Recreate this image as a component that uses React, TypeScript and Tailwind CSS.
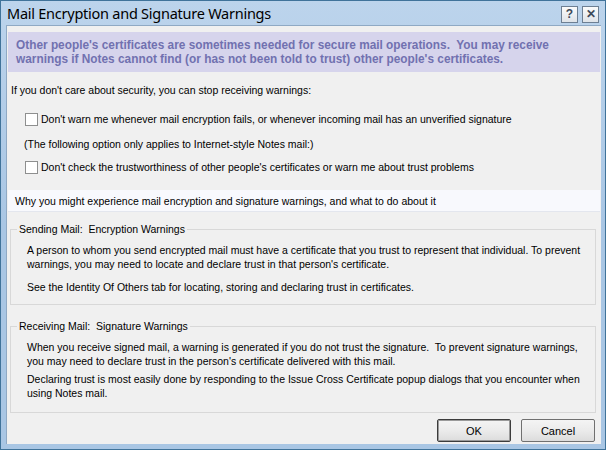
import type { ReactNode } from 'react'

function Check({ label }: { label: string }) {
  return (
    <div className="flex items-center gap-[3px] pl-[18px]">
      <span className="size-[13px] flex-none border border-[#8e8f8f] bg-white" />
      <span className="whitespace-nowrap">{label}</span>
    </div>
  )
}

function Group({ title, children, className }: { title: string; children: ReactNode; className: string }) {
  return (
    <fieldset className={`ml-[3px] mr-[5px] border border-[#d8d8d8] pl-[6px] pr-3 ${className}`}>
      <legend className="whitespace-pre px-[2px] leading-[14px]">{title}</legend>
      <div className="pl-[10px]">{children}</div>
    </fieldset>
  )
}

function Button({ label, primary }: { label: string; primary?: boolean }) {
  return (
    <button
      type="button"
      className={`h-[23px] w-[74px] rounded-[2px] border bg-gradient-to-b from-[#f4f4f4] via-[#ebebeb] to-[#dcdcdc] text-[11px] text-black ${
        primary ? 'border-[#3c3c3c] shadow-[inset_0_0_0_1px_#9a9a9a]' : 'border-[#707070]'
      }`}
    >
      {label}
    </button>
  )
}

export default function App() {
  return (
    <div className="flex h-[450px] w-[606px] flex-col overflow-hidden border border-[#40739a] bg-gradient-to-b from-[#bcd4ec] via-[#a9c6e4] to-[#a9c6e4] font-['Liberation_Sans',Arial,sans-serif] text-[10.5px] leading-[14px] text-black">
      {/* barre de titre */}
      <div className="flex h-[24px] flex-none items-center justify-between pl-[6px] pr-[6px]">
        <span className="font-['Noto_Sans',sans-serif] text-[14.5px] leading-[20px] tracking-[-0.25px] text-black">
          Mail Encryption and Signature Warnings
        </span>
        <div className="flex gap-[4px] pt-[2px]">
          <span className="grid size-[17px] place-items-center border border-[#6d7f93] bg-gradient-to-b from-[#fbfbfb] to-[#dfe3e8] text-[12px] font-bold leading-none text-[#3d4a5a]">
            ?
          </span>
          <span className="grid size-[17px] place-items-center border border-[#6d7f93] bg-gradient-to-b from-[#fbfbfb] to-[#dfe3e8] text-[12px] font-bold leading-none text-[#3d4a5a]">
            ✕
          </span>
        </div>
      </div>

      {/* zone cliente */}
      <div className="mb-[5px] ml-[5px] mr-[4px] flex flex-1 flex-col border-l border-t border-[#8fa9c4] bg-[#f0f0f0]">
        <div className="ml-[1px] mr-[1px] mt-[6px] flex h-[40px] flex-col justify-center whitespace-nowrap bg-[#d6d4ec] pl-[8px] text-[11.85px] font-bold leading-[14px] text-[#7171b0]">
          <p>Other people's certificates are sometimes needed for secure mail operations.&nbsp; You may receive</p>
          <p>warnings if Notes cannot find (or has not been told to trust) other people's certificates.</p>
        </div>

        <p className="mt-[11px] pl-[4px]">If you don't care about security, you can stop receiving warnings:</p>
        <div className="mt-[15px]">
          <Check label="Don't warn me whenever mail encryption fails, or whenever incoming mail has an unverified signature" />
        </div>
        <p className="mt-[11px] pl-[17px]">(The following option only applies to Internet-style Notes mail:)</p>
        <div className="mt-[9px]">
          <Check label="Don't check the trustworthiness of other people's certificates or warn me about trust problems" />
        </div>

        <div className="mx-[1px] mt-[16px] flex h-[22px] items-center border-b border-[#e3e6ee] bg-[#f8f9fd] pl-[7px]">
          Why you might experience mail encryption and signature warnings, and what to do about it
        </div>

        <Group title="Sending Mail:  Encryption Warnings" className="mt-[10px] whitespace-nowrap pb-[10px] pt-[7px]">
          <p>
            A person to whom you send encrypted mail must have a certificate that you trust to represent that individual. To prevent
            <br />
            warnings, you may need to locate and declare trust in that person's certificate.
          </p>
          <p className="mt-[9px]">See the Identity Of Others tab for locating, storing and declaring trust in certificates.</p>
        </Group>

        <Group title="Receiving Mail:  Signature Warnings" className="mt-[14px] whitespace-nowrap pb-[12px] pt-[7px]">
          <p>
            When you receive signed mail, a warning is generated if you do not trust the signature.&nbsp; To prevent signature warnings,
            <br />
            you may need to declare trust in the person's certificate delivered with this mail.
          </p>
          <p className="mt-[4px]">
            Declaring trust is most easily done by responding to the Issue Cross Certificate popup dialogs that you encounter when
            <br />
            using Notes mail.
          </p>
        </Group>

        <div className="mb-[2px] mr-[6px] mt-auto flex justify-end gap-[10px]">
          <Button label="OK" primary />
          <Button label="Cancel" />
        </div>
      </div>
    </div>
  )
}
